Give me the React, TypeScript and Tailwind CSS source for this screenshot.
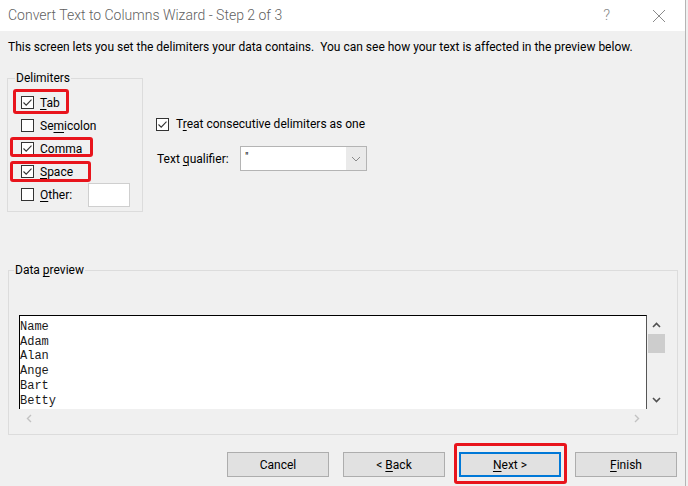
import React from "react";

const ui = "font-['Segoe_UI',Roboto,'Liberation_Sans',sans-serif]";

function Box({ checked }: { checked?: boolean }) {
  return (
    <span className="flex h-[13px] w-[13px] shrink-0 items-center justify-center border border-[#333333] bg-white">
      {checked && (
        <svg width="11" height="11" viewBox="0 0 11 11">
          <path d="M1.5 5.5 L4.2 8.2 L9.5 2.6" fill="none" stroke="#333333" strokeWidth="1.1" />
        </svg>
      )}
    </span>
  );
}

function Mnemonic({ pre = "", key_, post = "" }: { pre?: string; key_: string; post?: string }) {
  return (
    <span>
      {pre}
      <span className="underline underline-offset-[2px] decoration-[1px]">{key_}</span>
      {post}
    </span>
  );
}

type RowProps = {
  checked?: boolean;
  children: React.ReactNode;
  mark?: string;
  extra?: React.ReactNode;
};

function DelimRow({ checked, children, mark, extra }: RowProps) {
  return (
    <div className="relative flex h-[23px] items-center gap-[6px]">
      <Box checked={checked} />
      <span className="leading-[16px]">{children}</span>
      {extra}
      {mark && <span className={`pointer-events-none absolute rounded-[3px] border-[3px] border-[#e8141c] ${mark}`} />}
    </div>
  );
}

function Button({ children, focused }: { children: React.ReactNode; focused?: boolean }) {
  return (
    <div
      className={`flex h-[25px] w-[102px] items-center justify-center bg-[#e1e1e1] text-[12px] text-black ${
        focused ? "border-2 border-[#0078d7]" : "border border-[#adadad]"
      }`}
    >
      {children}
    </div>
  );
}

const rows = ["Name", "Adam", "Alan", "Ange", "Bart", "Betty"];

export default function App() {
  return (
    <div className={`flex h-[486px] w-[688px] overflow-hidden bg-[#f0f0f0] text-[12px] text-black ${ui}`}>
      <div className="flex w-[685px] flex-col">
        {/* title bar */}
        <div className="flex h-[31px] items-center bg-white pl-[8px]">
          <span className="text-[14px] font-light text-[#5f5f5f]">Convert Text to Columns Wizard - Step 2 of 3</span>
          <span className="ml-auto mr-[42px] text-[15px] font-light text-[#8a8a8a]">?</span>
          <svg className="mr-[19px]" width="14" height="14" viewBox="0 0 14 14">
            <path d="M1 1 L13 13 M13 1 L1 13" stroke="#8a8a8a" strokeWidth="1" fill="none" />
          </svg>
        </div>

        <p className="pl-[8px] pt-[8px] leading-[16px]">
          This screen lets you set the delimiters your data contains.&nbsp; You can see how your text is affected in the preview below.
        </p>

        {/* delimiters + options */}
        <div className="mt-[15px] flex gap-[13px] pl-[7px]">
          <fieldset className="w-[136px] border border-[#dcdcdc] pb-[5px] pl-[13px] pt-[5px]">
            <legend className="ml-[-6px] px-[1px] leading-[16px]">Delimiters</legend>
            <DelimRow checked mark="left-[-8px] top-[-2px] h-[25px] w-[56px]">
              <Mnemonic key_="T" post="ab" />
            </DelimRow>
            <DelimRow>
              <Mnemonic pre="Se" key_="m" post="icolon" />
            </DelimRow>
            <DelimRow checked mark="left-[-11px] top-[0px] h-[20px] w-[83px]">
              <Mnemonic key_="C" post="omma" />
            </DelimRow>
            <DelimRow checked mark="left-[-11px] top-[1px] h-[21px] w-[81px]">
              <Mnemonic key_="S" post="pace" />
            </DelimRow>
            <DelimRow
              extra={<span className="ml-[10px] h-[24px] w-[42px] border border-[#cfcfcf] bg-white" />}
            >
              <Mnemonic key_="O" post="ther:" />
            </DelimRow>
          </fieldset>

          <div className="flex flex-col pt-[46px]">
            <div className="flex h-[16px] items-center gap-[7px]">
              <Box checked />
              <span className="leading-[16px]">
                <Mnemonic pre="T" key_="r" post="eat consecutive delimiters as one" />
              </span>
            </div>
            <div className="mt-[14px] flex h-[25px] items-center">
              <span className="w-[84px] pl-[1px] leading-[16px]">
                <Mnemonic pre="Text " key_="q" post="ualifier:" />
              </span>
              <div className="flex h-[25px] w-[127px] border border-[#b4b4b4] bg-white">
                <span className="flex-1 pl-[4px] pt-[1px] text-[11px] leading-[18px]">"</span>
                <span className="flex w-[20px] items-center justify-center bg-[#eaeaea]">
                  <svg width="10" height="6" viewBox="0 0 10 6">
                    <path d="M1 1 L5 5 L9 1" stroke="#8a8a8a" strokeWidth="1" fill="none" />
                  </svg>
                </span>
              </div>
            </div>
          </div>
        </div>

        {/* data preview */}
        <fieldset className="ml-[8px] mt-[50px] w-[670px] border border-[#dcdcdc] pb-[6px] pl-[10px] pt-[37px]">
          <legend className="ml-[-5px] px-[1px] leading-[16px]">
            <Mnemonic pre="Data " key_="p" post="review" />
          </legend>
          <div className="flex">
            <div className="h-[94px] w-[628px] overflow-hidden border-l border-r border-t border-l-black border-r-[#555555] border-t-black bg-white pt-[4px] font-['Liberation_Mono',monospace] text-[12px] leading-[14.7px] text-[#1a1a1a]">
              {rows.map((r) => (
                <div key={r}>{r}</div>
              ))}
            </div>
            <div className="flex h-[94px] w-[19px] flex-col items-center">
              <div className="flex h-[19px] items-center justify-center">
                <svg width="9" height="6" viewBox="0 0 9 6">
                  <path d="M1 5 L4.5 1.5 L8 5" stroke="#505050" strokeWidth="1.6" fill="none" />
                </svg>
              </div>
              <div className="h-[19px] w-[17px] bg-[#cdcdcd]" />
              <div className="flex-1" />
              <div className="flex h-[19px] items-center justify-center">
                <svg width="9" height="6" viewBox="0 0 9 6">
                  <path d="M1 1 L4.5 4.5 L8 1" stroke="#505050" strokeWidth="1.6" fill="none" />
                </svg>
              </div>
            </div>
          </div>
          <div className="flex h-[19px] w-[628px] items-center justify-between px-[7px]">
            <svg width="6" height="9" viewBox="0 0 6 9">
              <path d="M5 1 L1.5 4.5 L5 8" stroke="#c2c2c2" strokeWidth="1.4" fill="none" />
            </svg>
            <svg width="6" height="9" viewBox="0 0 6 9">
              <path d="M1 1 L4.5 4.5 L1 8" stroke="#c2c2c2" strokeWidth="1.4" fill="none" />
            </svg>
          </div>
        </fieldset>

        {/* buttons */}
        <div className="mt-[17px] flex justify-end gap-[14px] pr-[8px]">
          <Button>Cancel</Button>
          <Button>
            <span>
              &lt; <Mnemonic key_="B" post="ack" />
            </span>
          </Button>
          <div className="relative">
            <Button focused>
              <span>
                <Mnemonic key_="N" post="ext" /> &gt;
              </span>
            </Button>
            <span className="pointer-events-none absolute left-[-5px] top-[-9px] h-[41px] w-[113px] rounded-[3px] border-[3px] border-[#e8141c]" />
          </div>
          <Button>
            <Mnemonic key_="F" post="inish" />
          </Button>
        </div>
      </div>
      <div className="w-px bg-[#b5b5b5]" />
      <div className="w-[2px] bg-[#f0f0f0]" />
    </div>
  );
}
